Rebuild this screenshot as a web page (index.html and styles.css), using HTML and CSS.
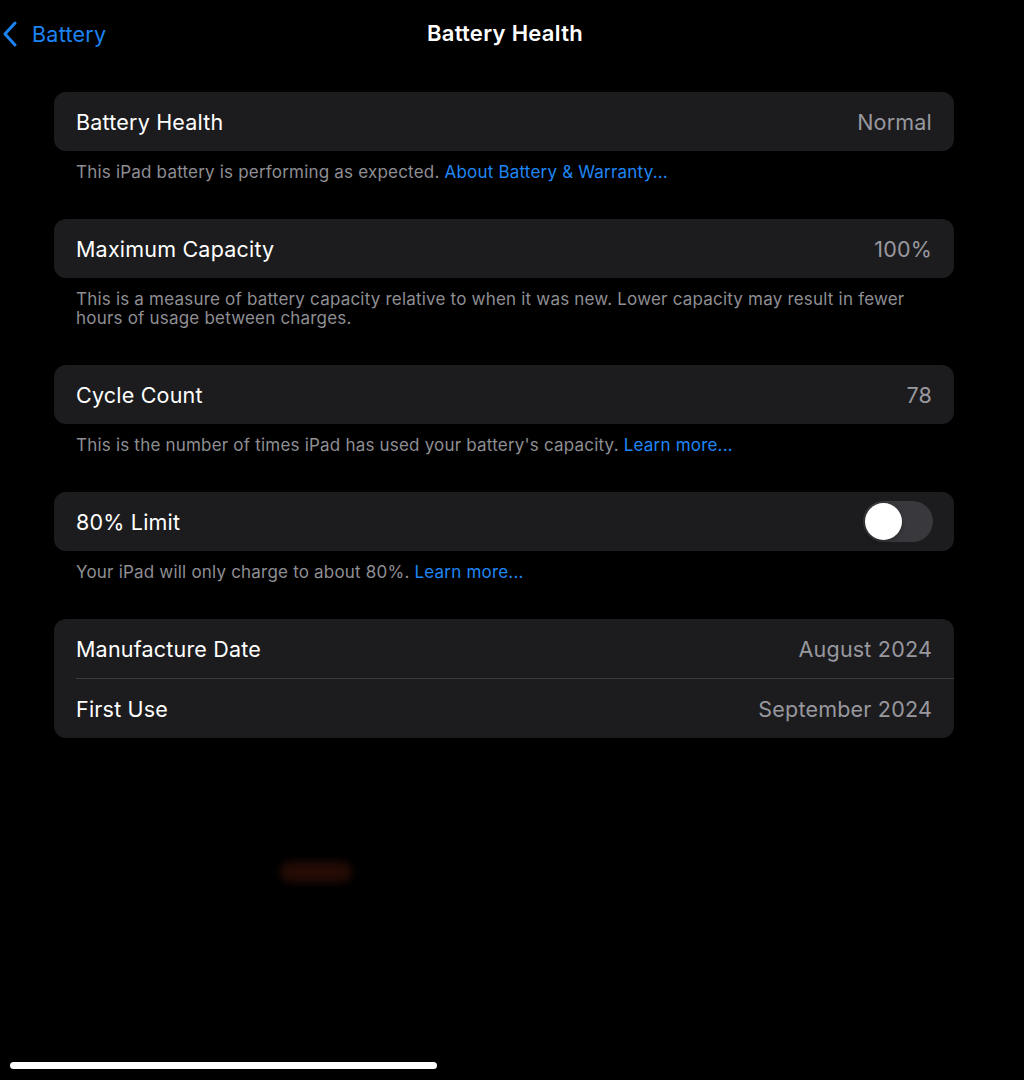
FILE: index.html
```html
<!DOCTYPE html>
<html>
<head>
<meta charset="utf-8">
<link rel="stylesheet" href="styles.css">
</head>
<body>
<div class="screen">
  <header class="nav">
    <a class="back">
      <svg class="chev" width="16" height="26" viewBox="0 0 16 26"><path d="M13 2 L3 13 L13 24" fill="none" stroke="#1c83f2" stroke-width="3" stroke-linecap="round" stroke-linejoin="round"/></svg>
      <span>Battery</span>
    </a>
    <h1 class="title">Battery Health</h1>
  </header>

  <main class="content">
    <section class="group">
      <div class="card">
        <div class="row"><span class="label">Battery Health</span><span class="value">Normal</span></div>
      </div>
      <p class="footer">This iPad battery is performing as expected. <a class="link">About Battery &amp; Warranty...</a></p>
    </section>

    <section class="group">
      <div class="card">
        <div class="row"><span class="label">Maximum Capacity</span><span class="value">100%</span></div>
      </div>
      <p class="footer">This is a measure of battery capacity relative to when it was new. Lower capacity may result in fewer hours of usage between charges.</p>
    </section>

    <section class="group">
      <div class="card">
        <div class="row"><span class="label">Cycle Count</span><span class="value">78</span></div>
      </div>
      <p class="footer">This is the number of times iPad has used your battery's capacity. <a class="link">Learn more...</a></p>
    </section>

    <section class="group">
      <div class="card">
        <div class="row"><span class="label">80% Limit</span><span class="toggle"><span class="knob"></span></span></div>
      </div>
      <p class="footer">Your iPad will only charge to about 80%. <a class="link">Learn more...</a></p>
    </section>

    <section class="group">
      <div class="card">
        <div class="row sep"><span class="label">Manufacture Date</span><span class="value">August 2024</span></div>
        <div class="row"><span class="label">First Use</span><span class="value">September 2024</span></div>
      </div>
    </section>
  </main>

  <div class="blob"></div>
  <div class="home"></div>
</div>
</body>
</html>
```

FILE: styles.css
```css
* { box-sizing: border-box; }
html, body {
  margin: 0;
  padding: 0;
  background: #000;
}
body {
  font-family: Inter, "Open Sans", "Liberation Sans", sans-serif;
  color: #fff;
  width: 1024px;
  height: 1080px;
  overflow: hidden;
}
.screen {
  position: relative;
  width: 1024px;
  height: 1080px;
}
.nav {
  position: relative;
  height: 70px;
  display: flex;
  align-items: center;
  justify-content: center;
}
.back {
  position: absolute;
  left: 2px;
  top: 21px;
  display: flex;
  align-items: center;
  gap: 14px;
  color: #1c83f2;
  font-size: 21.5px;
  letter-spacing: 0.25px;
}
.chev { display: block; }
.title {
  margin: 0;
  font-size: 22px;
  font-weight: 600;
  letter-spacing: 0.3px;
  position: relative;
  top: -2px;
  left: -7px;
}
.content {
  padding: 22px 70px 0 54px;
}
.card {
  background: #1c1c1e;
  border-radius: 12px;
  overflow: hidden;
}
.row {
  height: 59px;
  display: flex;
  align-items: center;
  justify-content: space-between;
  padding: 0 22px;
  font-size: 21.5px;
  letter-spacing: 0.2px;
  position: relative;
}
.row.sep { height: 60px; }
.row.sep::after {
  content: "";
  position: absolute;
  left: 22px;
  right: 0;
  bottom: 0;
  height: 1px;
  background: #3a3a3c;
}
.label { color: #fff; }
.value { color: #98989e; }
.footer {
  margin: 0;
  padding: 12px 22px 37px;
  font-size: 17px;
  line-height: 19px;
  letter-spacing: 0.2px;
  color: #8e8e93;
}
.link { color: #1f86f5; }
.toggle {
  width: 70px;
  height: 41px;
  border-radius: 21px;
  background: #39393d;
  position: relative;
  margin-right: -1px;
}
.knob {
  position: absolute;
  left: 2px;
  top: 2px;
  width: 37px;
  height: 37px;
  border-radius: 50%;
  background: #fff;
  box-shadow: 0 2px 4px rgba(0,0,0,0.3);
}
.blob {
  position: absolute;
  left: 280px;
  top: 862px;
  width: 72px;
  height: 20px;
  border-radius: 10px;
  background: #2a0d07;
  filter: blur(4px);
  opacity: 0.9;
}
.home {
  position: absolute;
  left: 10px;
  top: 1062px;
  width: 427px;
  height: 7px;
  border-radius: 4px;
  background: #fff;
}
```
